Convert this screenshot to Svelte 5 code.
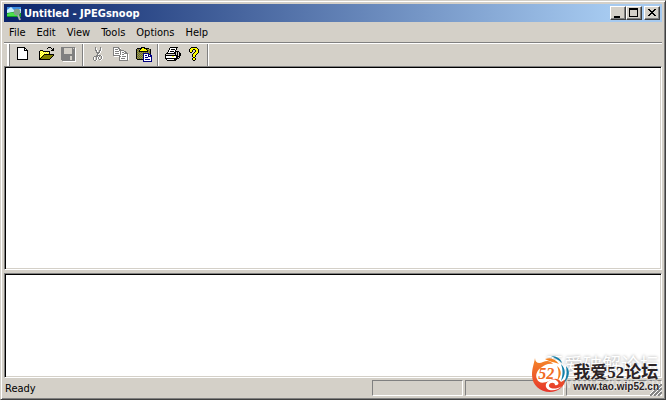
<script>
  const menus = ['File', 'Edit', 'View', 'Tools', 'Options', 'Help'];

  // Pixel glyphs: one character per pixel, looked up in the palette.
  const palette = { k: '#000', w: '#fff', g: '#808080', y: '#ff0', l: '#ffff9c', o: '#808000', n: '#000080', s: '#d4d0c8', c: '#c0c0c0' };
  const art = {
    New: [
      '..kkkkkkkk.....', '..kwwwwwwkk....', '..kwwwwwwkwk...', '..kwwwwwwkkkk..', '..kwwwwwwwwwk..',
      '..kwwwwwwwwwk..', '..kwwwwwwwwwk..', '..kwwwwwwwwwk..', '..kwwwwwwwwwk..', '..kwwwwwwwwwk..', '..kwwwwwwwwwk..',
      '..kwwwwwwwwwk..', '..kkkkkkkkkkk..'],
    Open: [
      '..........kkk...', '.........k...k.k', '..............kk', '..kkk........kkk', '.kylykkkkkkk....', '.klylylylylk....', '.kylylylylyk....',
      '.klylykkkkkkkkkk', '.kylykoooooooook', '.klykoooooooook.', '.kykoooooooook..', '.kkoooooooook...', '.kkkkkkkkkkk....', '................'],
    Save: [
      'gggggggggggggg.', 'gggssssssssgsgw', 'gggssssssssgggw', 'gggssssssssgggw', 'gggssssssssgggw', 'gggssssssssgggw', 'gggssssssssgggw', 'ggggggggggggggw',
      'ggggggggggggggw', 'gggggggggssgggw', 'gggggggggssgggw', 'gggggggggssgggw', 'gggggggggssgggw', '.gggggggggggggw', '..wwwwwwwwwwwww'],
    Cut: [
      '.....g....g....', '.....gw...gw...', '.....gw...gw...', '.....ggw.ggw...', '......gw.gw....', '......ggggw....', '.......ggw.....', '.......gw......',
      '......gggggw...', '....ggggwg.gw..', '...gw.gwgw.gw..', '...gw.gwgw.gw..', '...gw.gw.ggw...', '....ggw...w....'],
    Copy: [
      'gggggg..........', 'gwwwwggw........', 'gwgggwgg........', 'gwwwwwggggg.....', 'gwggggwgwwwgg...', 'gwwwwwwgwggwgg..', 'gwggggwgwwwgggg.', 'gwwwwwwgwggwwwgw',
      'gggggggwwwwwwwgw', '.wwwwwggwggggwgw', '......gwwwwwwwgw', '......gwggggwwgw', '......gwwwwwwwgw', '......ggggggggg.'],
    Paste: [
      '.....kkkk.......', '.kkkkkyykkkkk...', 'kgogkyyyyykogok.', 'kogkyyyyyyykogk.', 'kgokkkkkkkkkgok.', 'kogogogogogogok.', 'kgogogonnnnnnok.', 'kogogognwwwwnnn.',
      'kgogogonwnnwnwnn', 'kogogognwwwwnnnn', 'kgogogonwnnnwwwn', 'kogogognwwwwwwwn', '.kkkkkknwnnnnnwn', '.......nwwwwwwwn', '.......nnnnnnnnn'],
    Print: [
      '.....kkkkkkkk...', '....kwwwwwwk....', '....kwkkkkwk....', '...kwwwwwwk.....', '...kwkkkkwkkkk..', '..kwwwwwwkksksk.', '.kkkkkkkkkkskskk', 'kssssssssskskskk',
      'kkkkkkkkkkkkkskk', 'kwwwwwwyywwkkkk.', 'kwwwwwwwwwwkksk.', 'kkkkkkkkkkkkkk..', '.kwwwwwwwkkk....', '..kkkkkkkkk.....'],
    About: [
      '...kkkkkk...', '..kyyyyyyk..', '.kyyykkyyyk.', '.kyyk..kyyk.', '.kyyk..kyyk.', '..kk..kyyyk.', '.....kyyyk..', '....kyyyk...',
      '....kyyk....', '....kyyk....', '.....kk.....', '....kyyk....', '....kyyk....', '.....kk.....']
  };
  const groups = [['New', 'Open', 'Save'], ['Cut', 'Copy', 'Paste'], ['Print', 'About']];
  const disabled = ['Save', 'Cut', 'Copy'];

  function pixels(name) {
    const out = [];
    art[name].forEach((row, y) => {
      let x = 0;
      while (x < row.length) {
        let end = x + 1;
        while (end < row.length && row[end] === row[x]) end++;
        if (palette[row[x]]) out.push({ x, y, w: end - x, fill: palette[row[x]] });
        x = end;
      }
    });
    return out;
  }
</script>

<main class="window">
  <header class="titlebar">
    <svg class="appicon" viewBox="0 0 16 16" width="16" height="16" aria-hidden="true">
      <path fill="#3c91e5" d="M1 2h14v6H1z" /><path fill="#c6ecfa" d="M1 5l4-3 3 3 7-1v4H1z" />
      <path fill="#129b25" d="M1 8l6-1 8 1v4H1z" /><path fill="#4be04a" d="M1 9q6-3 10 0v2H1z" />
      <circle cx="11" cy="7" r="3" fill="#7fa685" stroke="#8b9a92" /><path d="M12 10l2 5" stroke="#a9b3ae" stroke-width="2" />
    </svg>
    <h1>Untitled - JPEGsnoop</h1>
    <div class="controls">
      <button aria-label="Minimize"><svg viewBox="0 0 12 10" width="12" height="10"><path d="M2 8h6v2H2z" /></svg></button>
      <button aria-label="Maximize"><svg viewBox="0 0 12 10" width="12" height="10"><path fill-rule="evenodd" d="M1 0h9v9H1zM2 2v6h7V2z" /></svg></button>
      <button class="close" aria-label="Close"><svg viewBox="0 0 12 10" width="12" height="10"><path d="M2 1h2v1h1v1h2V2h1V1h2v1H9v1H8v1H7v1h1v1h1v1h1v1H8V7H7V6H5v1H4v1H2V7h1V6h1V5h1V4H4V3H3V2H2z" /></svg></button>
    </div>
  </header>

  <nav class="menu">
    {#each menus as item}<button>{item}</button>{/each}
  </nav>

  <div class="toolbar" role="toolbar" aria-label="Standard">
    {#each groups as group}
      <div class="group">
        {#each group as name}
          <button aria-label={name} disabled={disabled.includes(name)}>
            <svg viewBox="0 0 16 16" width="16" height="16" shape-rendering="crispEdges">
              {#each pixels(name) as p}<rect x={p.x} y={p.y} width={p.w} height="1" fill={p.fill} />{/each}
            </svg>
          </button>
        {/each}
      </div>
    {/each}
  </div>

  <textarea class="pane report" aria-label="Report" readonly></textarea>
  <textarea class="pane preview" aria-label="Image preview" readonly></textarea>

  <footer class="status">
    <span class="message">Ready</span>
    <span class="cell"></span><span class="cell wide"></span><span class="cell last"></span>
    <svg class="grip" viewBox="0 0 12 12" width="12" height="12" aria-hidden="true">
      <path d="M0 12L12 0M4 12l8-8M8 12l4-4" stroke="#808080" stroke-width="2" /><path d="M-1 11L11-1M3 11l8-8M7 11l4-4" stroke="#fff" />
    </svg>
  </footer>

  <div class="ghost" aria-hidden="true"><span>吾爱破解论坛</span><small>www.52pojie.cn</small></div>
  <aside class="mark">
    <svg viewBox="0 0 40 38" width="40" height="38" aria-hidden="true">
      <defs><linearGradient id="flame" x2="0" y2="1"><stop stop-color="#f58a2a" /><stop offset="1" stop-color="#e6352b" /></linearGradient></defs>
      <circle cx="19" cy="20" r="16" fill="#fff" />
      <path fill="url(#flame)" d="M4 3C4 8 8 9 12 7c4-2 8-1 10 2-5-1-8 1-11 3-5 3-7 8-5 12 2 5 7 4 12 2 5-3 9-3 12 1l5-3c-2 8-8 13-16 13C9 37 1 30 1 20 1 13 3 9 4 3z" />
      <path fill="#fff" d="M15 29c2-4 8-6 11-3 3 2 1 5-2 4 0-3-5-3-6 0-1 4 7 5 13 1-5 6-18 6-16-2z" />
      <path fill="#f58220" d="M14 4c6-2 10 0 14 5-5-2-9-2-14-5z" />
      <path fill="#f58220" d="M26 11c5 4 5 10 0 15 2-6 2-10 0-15z" />
      <path fill="#137fa8" d="M20 1c6 0 10 3 11 7-3-3-7-5-11-7zM30 9c5 5 5 11 0 17 2-7 2-11 0-17zM35 11c5 5 3 12-2 17 3-7 3-11 2-17z" />
    </svg>
    <b class="number">52</b>
    <div class="words"><strong>我爱52论坛</strong><a href="http://www.tao.wip52.cn">www.tao.wip52.cn</a></div>
  </aside>
</main>

<style>
  :global(body) { margin: 0; background: #d4d0c8; }
  .window {
    position: relative; box-sizing: border-box; height: 100vh; min-height: 300px;
    display: flex; flex-direction: column; padding: 3px; overflow: hidden;
    border: 1px solid; border-color: #d4d0c8 #404040 #404040 #d4d0c8;
    box-shadow: inset 1px 1px #fff, inset -1px -1px #808080;
    background: #d4d0c8; color: #000;
    font: 11px/14px Tahoma, "DejaVu Sans Condensed", "DejaVu Sans", sans-serif;
  }
  button { font: inherit; color: inherit; background: none; border: 0; padding: 0; margin: 0; }
  svg { display: block; }
  .titlebar { flex: none; display: flex; align-items: center; height: 18px; padding: 0 2px; background: linear-gradient(90deg, #0a246a, #a6caf0 92%); }
  h1 { flex: 1; margin: 0 0 0 2px; padding-top: 2px; color: #fff; font-size: 11px; font-weight: bold; white-space: nowrap; }
  .controls { display: flex; }
  .controls button {
    box-sizing: border-box; width: 16px; height: 14px; padding: 1px; background: #d4d0c8;
    border: 1px solid; border-color: #fff #404040 #404040 #fff; box-shadow: inset -1px -1px #808080;
  }
  .controls .close { margin-left: 2px; }
  .menu { flex: none; display: flex; height: 20px; gap: 11px; padding: 0 5px; border-bottom: 1px solid #808080; }
  .menu button { padding-top: 2px; }
  .toolbar { flex: none; display: flex; height: 22px; border-top: 1px solid #fff; }
  .toolbar::before { content: ""; margin-left: 3px; border-left: 2px solid #fff; border-right: 1px solid #808080; }
  .group { display: flex; padding: 0 2px 0 3px; border-right: 1px solid #808080; box-shadow: 1px 0 #fff; }
  .group:first-child { padding-left: 1px; }
  .group:last-child { padding-right: 0; }
  .group button { width: 23px; padding: 3px 3px 3px 4px; }
  .pane {
    box-sizing: border-box; display: block; width: 100%; margin: 0; padding: 0; resize: none; outline: 0; border-radius: 0; background: #fff;
    border: 1px solid; border-color: #808080 #fff #fff #808080; box-shadow: inset 1px 1px #000, inset -1px -1px #d4d0c8;
  }
  .report { flex: 204 1 0; min-height: 0; }
  .preview { flex: 104 1 0; min-height: 0; margin-top: 3px; }
  .status { flex: none; display: flex; height: 17px; padding-top: 1px; gap: 2px; position: relative; }
  .message { flex: 1; padding: 3px 1px; }
  .cell { box-sizing: border-box; width: 91px; height: 16px; margin-top: 1px; border: 1px solid; border-color: #808080 #fff #fff #808080; }
  .cell.wide { width: 99px; }
  .cell.last { width: 96px; }
  .grip { position: absolute; right: 0; bottom: 0; }
  .ghost { position: absolute; right: 6px; bottom: 7px; display: flex; flex-direction: column; align-items: flex-end; color: #fff; font: 19px/20px "Noto Sans CJK SC", sans-serif; text-shadow: 0 0 3px #999; }
  .ghost small { font: 14px/18px "Liberation Sans", sans-serif; opacity: 0.5; text-shadow: none; }
  .mark { position: absolute; right: 6px; bottom: 6px; display: flex; align-items: flex-start; gap: 2px; }
  .number { position: absolute; left: 7px; top: 11px; color: #f16a24; font: italic bold 16px/16px "Liberation Serif", serif; }
  .words { display: flex; flex-direction: column; padding-top: 9px; color: #2b2325; text-shadow: 0 0 2px #fff; }
  .words strong { font: bold 17px/18px "Liberation Serif", "Noto Sans CJK SC", serif; white-space: nowrap; }
  .words a { color: inherit; text-decoration: none; font: bold 10px/10px "Liberation Sans", sans-serif; }
</style>
